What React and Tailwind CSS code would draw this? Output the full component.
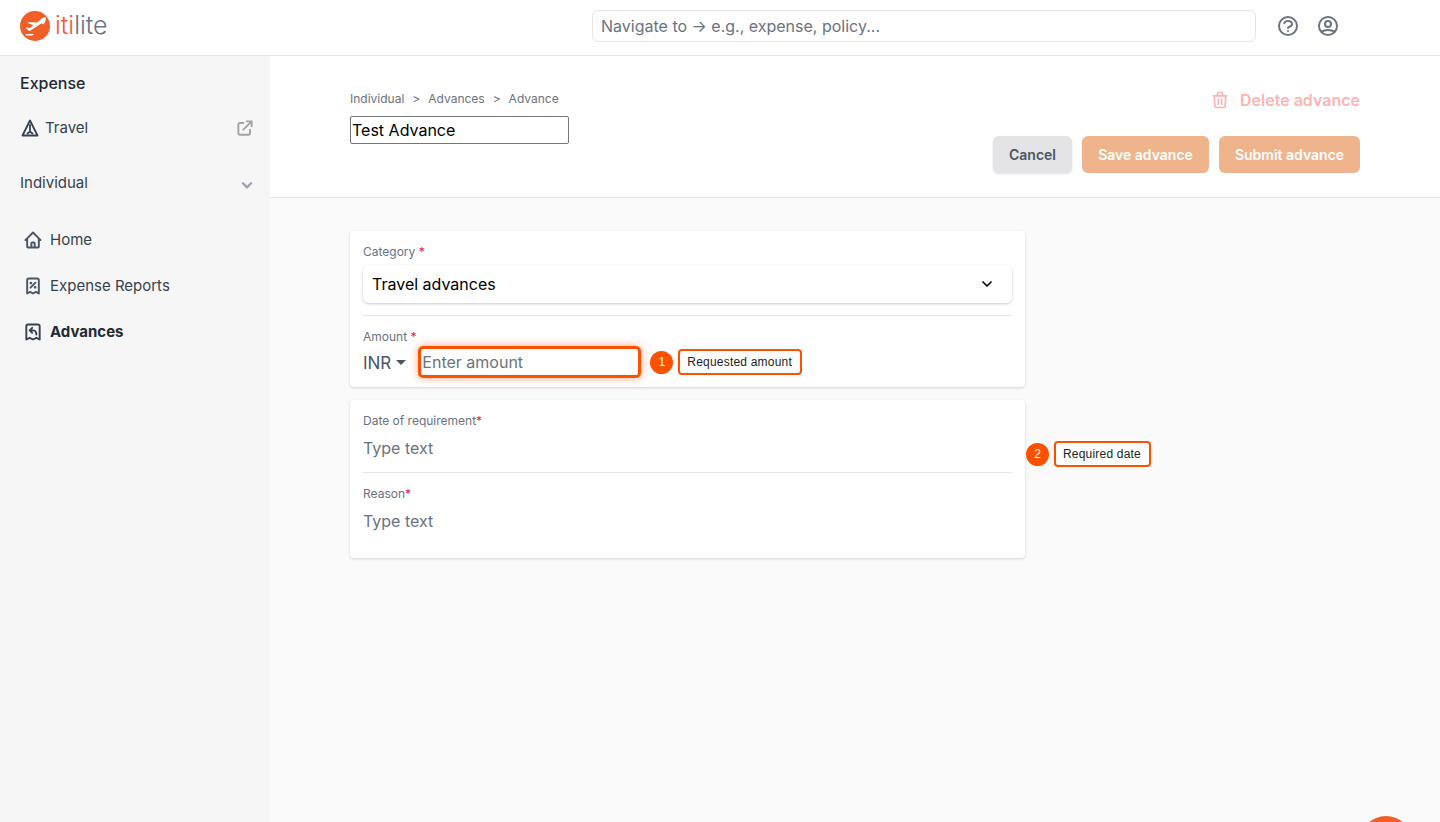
import {
  HiOutlineChevronDown,
  HiOutlineExternalLink,
  HiOutlineHome,
  HiOutlineQuestionMarkCircle,
  HiOutlineReceiptRefund,
  HiOutlineReceiptTax,
  HiOutlineTrash,
  HiOutlineUserCircle,
} from "react-icons/hi";
import { ChevronDown } from "lucide-react";

const font = "font-['Inter',sans-serif]";

function Logo() {
  return (
    <div className="flex items-center gap-[5px]">
      <svg width="30" height="30" viewBox="0 0 30 30">
        <circle cx="15" cy="15" r="15" fill="#f15f26" />
        <path
          d="M26 6c-1.800.1-3.500 1-5 2.200L17 11.500l-8-.5-1.200.9 5.700 2.300-3.500 2.700-3.500-.5-1 .7 2.800 1.800.5 1.100 1-.1 11.700-7.600C24 16 26.200 9 26 6z"
          fill="#fff"
        />
        <path d="M5 23h9l-1.800 1.600H6.500z" fill="#fff" />
      </svg>
      <span className="text-[25px] leading-none font-light text-[#6b7280]">
        <span className="text-[#ef5a3c]">iti</span>lite
      </span>
    </div>
  );
}

function TravelIcon() {
  return (
    <svg width="20" height="20" viewBox="0 0 20 20" fill="none" stroke="#374151" strokeWidth="1.800" strokeLinejoin="round" strokeLinecap="round">
      <path d="M10 2.500 2.500 17.500h15z" />
      <path d="M10 7v6.500M7.500 15.500 10 13.500l2.500 2" />
    </svg>
  );
}

function NavItem({ icon: Icon, label, active }) {
  return (
    <div className="flex items-center h-[46px] pl-[23px]">
      <Icon size={20} strokeWidth={2.300} className={active ? "text-[#374151]" : "text-[#4b5563]"} />
      <span className={`ml-[7px] text-[15px] ${active ? "font-bold text-[#1f2937]" : "text-[#374151]"}`}>{label}</span>
    </div>
  );
}

function Sidebar() {
  return (
    <aside className="w-[270px] shrink-0 bg-[#f6f6f6] flex flex-col">
      <div className="pl-[20px] pt-[17px] text-[16px] leading-[20px] font-medium text-[#1f2937]">Expense</div>
      <div className="flex items-center justify-between pl-[20px] pr-[15px] mt-[25px] h-[20px]">
        <div className="flex items-center gap-[5px] text-[15px] text-[#374151]">
          <TravelIcon />
          Travel
        </div>
        <HiOutlineExternalLink size={20} strokeWidth={2.300} className="text-[#a3a3a3]" />
      </div>
      <div className="flex items-center justify-between pl-[20px] pr-[16px] mt-[35px] h-[20px] text-[15px] text-[#374151]">
        Individual
        <HiOutlineChevronDown size={14} className="text-[#9ca3af] mt-[3px]" strokeWidth={4} />
      </div>
      <div className="mt-[24px]">
        <NavItem icon={HiOutlineHome} label="Home" />
        <NavItem icon={HiOutlineReceiptTax} label="Expense Reports" />
        <NavItem icon={HiOutlineReceiptRefund} label="Advances" active />
      </div>
    </aside>
  );
}

function Label({ text, gap }) {
  return (
    <div className="text-[12px] leading-[16px] text-[#6b7280]">
      {text}
      {gap && " "}
      <span className="text-[#f0163c]">*</span>
    </div>
  );
}

function Tag({ number, text }) {
  return (
    <div className="flex items-center gap-[5px]">
      <div className="w-[23px] h-[23px] rounded-full bg-[#ff5000] text-white flex items-center justify-center text-[12px] font-['Liberation_Sans',sans-serif]">
        {number}
      </div>
      <div className="h-[26px] flex items-center border-2 border-[#ff5000] rounded-[4px] bg-white pl-[7px] pr-[8px] text-[12px] tracking-[0.2px] whitespace-nowrap text-[#222] font-['Liberation_Sans',sans-serif]">
        {text}
      </div>
    </div>
  );
}

export default function App() {
  return (
    <div className={`${font} relative h-[822px] w-[1440px] overflow-hidden bg-[#fafafa] flex flex-col`}>
      <header className="h-[56px] shrink-0 bg-white border-b border-[#e5e7eb] flex items-center pl-[20px]">
        <div className="w-[572px] -mt-[4px]">
          <Logo />
        </div>
        <input
          placeholder="Navigate to → e.g., expense, policy..."
          className="w-[664px] h-[32px] -mt-[4px] px-[8px] border border-[#e5e7eb] rounded-[6px] text-[16px] outline-none placeholder:text-[#6b7280]"
        />
        <HiOutlineQuestionMarkCircle size={24} className="ml-[20px] -mt-[4px] text-[#6b7280]" />
        <HiOutlineUserCircle size={24} className="ml-[16px] -mt-[4px] text-[#6b7280]" />
      </header>

      <div className="flex flex-1 min-h-0">
        <Sidebar />
        <main className="flex-1 min-w-0">
          <div className="h-[142px] bg-white border-b border-[#e5e7eb] pl-[80px] pr-[80px] flex justify-between">
            <div className="pt-[35px]">
              <div className="flex items-center text-[12px] leading-[16px] text-[#6b7280]">
                <span>Individual</span>
                <span className="mx-[8px]">&gt;</span>
                <span>Advances</span>
                <span className="mx-[8px]">&gt;</span>
                <span>Advance</span>
              </div>
              <input
                defaultValue="Test Advance"
                className="mt-[9px] w-[219px] h-[28px] px-[1px] border border-[#767676] rounded-[2px] text-[16px] text-black outline-none"
              />
            </div>
            <div className="flex flex-col items-end pt-[34px]">
              <div className="flex items-center h-[20px] text-[16px] font-semibold text-[#fdb4b4]">
                <HiOutlineTrash size={20} className="mr-[10px]" />
                Delete advance
              </div>
              <div className="flex gap-[10px] mt-[26px]">
                <button className="h-[37px] w-[79px] rounded-[6px] bg-[#e4e4e7] text-[14px] font-semibold text-[#4b5563] shadow-sm">Cancel</button>
                <button className="h-[37px] w-[127px] rounded-[6px] bg-[#efb48c] text-[14px] font-semibold text-white">Save advance</button>
                <button className="h-[37px] w-[141px] rounded-[6px] bg-[#efb48c] text-[14px] font-semibold text-white">Submit advance</button>
              </div>
            </div>
          </div>

          <div className="pl-[80px] pt-[33px] flex flex-col gap-[13px]">
            <section className="w-[675px] h-[156px] bg-white rounded-[4px] shadow-[0_1px_3px_rgba(0,0,0,0.15)] px-[13px] pt-[13px]">
              <Label text="Category" gap />
              <div className="mt-[5px] h-[38px] flex items-center justify-between pl-[9px] pr-[17px] rounded-[6px] shadow-[0_1px_3px_rgba(0,0,0,0.2)] text-[16px] text-black">
                Travel advances
                <ChevronDown size={16} strokeWidth={2.500} />
              </div>
              <div className="mt-[12px] border-t border-[#e5e7eb]" />
              <div className="mt-[13px]">
                <Label text="Amount" gap />
              </div>
              <div className="flex items-center mt-[1px]">
                <span className="pt-[3px] text-[17px] text-[#4b5563]">INR</span>
                <span className="ml-[5px] w-0 h-0 border-x-[5px] border-x-transparent border-t-[5px] border-t-[#4b5563]" />
                <input
                  placeholder="Enter amount"
                  className="ml-[12px] w-[223px] h-[32px] px-[1px] border-[3px] border-[#ff5000] rounded-[5px] text-[16px] outline-none shadow-[0_0_8px_rgba(255,80,0,0.5)] placeholder:text-[#6b7280]"
                />
                <div className="ml-[9px]">
                  <Tag number="1" text="Requested amount" />
                </div>
              </div>
            </section>

            <section className="relative w-[675px] h-[158px] bg-white rounded-[4px] shadow-[0_1px_3px_rgba(0,0,0,0.15)] px-[13px] pt-[13px]">
              <Label text="Date of requirement" />
              <input placeholder="Type text" className="mt-[7px] block w-full h-[24px] text-[16px] outline-none placeholder:text-[#6b7280]" />
              <div className="mt-[12px] border-t border-[#e5e7eb]" />
              <div className="mt-[13px]">
                <Label text="Reason" />
              </div>
              <input placeholder="Type text" className="mt-[7px] block w-full h-[24px] text-[16px] outline-none placeholder:text-[#6b7280]" />
              <div className="absolute left-[676px] top-[41px]">
                <Tag number="2" text="Required date" />
              </div>
            </section>
          </div>
        </main>
      </div>

      <div className="absolute left-[1360px] top-[816px] w-[52px] h-[52px] rounded-full bg-[#f15f26]" />
    </div>
  );
}
